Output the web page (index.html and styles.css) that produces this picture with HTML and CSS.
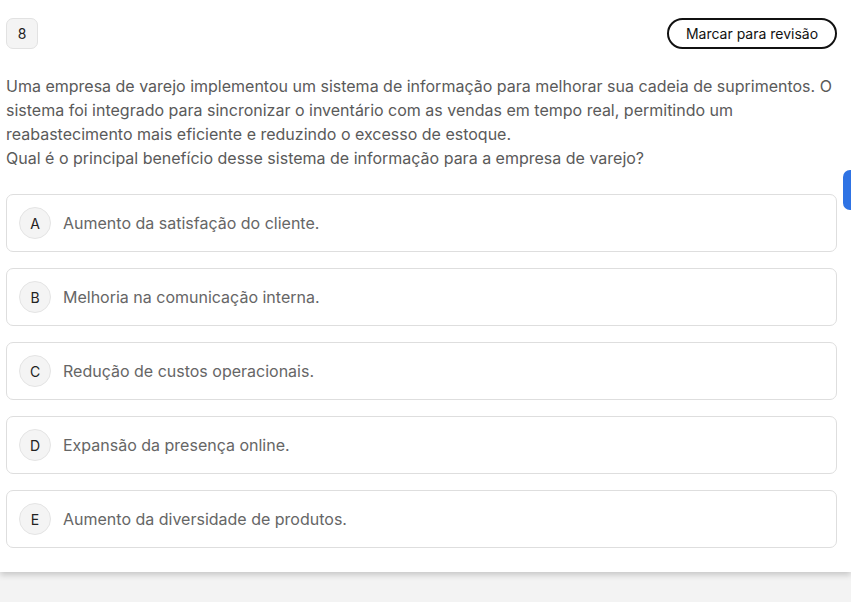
FILE: index.html
```html
<!DOCTYPE html>
<html lang="pt-BR">
<head>
<meta charset="utf-8">
<title>Questão 8</title>
<link rel="stylesheet" href="styles.css">
</head>
<body>
<main class="card">
  <header class="card-head">
    <span class="q-number">8</span>
    <button class="review-btn" type="button">Marcar para revisão</button>
  </header>
  <p class="statement">Uma empresa de varejo implementou um sistema de informação para melhorar sua cadeia de suprimentos. O sistema foi integrado para sincronizar o inventário com as vendas em tempo real, permitindo um reabastecimento mais eficiente e reduzindo o excesso de estoque.<br>Qual é o principal benefício desse sistema de informação para a empresa de varejo?</p>
  <ul class="options">
    <li class="option"><span class="letter">A</span><span class="option-text">Aumento da satisfação do cliente.</span></li>
    <li class="option"><span class="letter">B</span><span class="option-text">Melhoria na comunicação interna.</span></li>
    <li class="option"><span class="letter">C</span><span class="option-text">Redução de custos operacionais.</span></li>
    <li class="option"><span class="letter">D</span><span class="option-text">Expansão da presença online.</span></li>
    <li class="option"><span class="letter">E</span><span class="option-text">Aumento da diversidade de produtos.</span></li>
  </ul>
  <span class="side-tab"></span>
</main>
</body>
</html>
```
FILE: styles.css
```css
html, body {
  margin: 0;
  padding: 0;
}

body {
  background: #f3f3f3;
  font-family: Inter, "Noto Sans", sans-serif;
  height: 602px;
  overflow: hidden;
}

.card {
  position: relative;
  background: #ffffff;
  padding: 18px 14px 24px 6px;
  box-shadow: 0 3px 6px rgba(0, 0, 0, 0.18);
}

.card-head {
  display: flex;
  justify-content: space-between;
  align-items: center;
}

.q-number {
  box-sizing: border-box;
  width: 32px;
  height: 31px;
  display: flex;
  align-items: center;
  justify-content: center;
  background: #f4f4f4;
  border: 1px solid #e2e2e2;
  border-radius: 7px;
  font-size: 14px;
  color: #222;
}

.review-btn {
  box-sizing: border-box;
  width: 170px;
  height: 31px;
  padding: 0;
  background: #fff;
  border: 2px solid #111;
  border-radius: 16px;
  font-family: inherit;
  font-size: 14px;
  color: #111;
}

.statement {
  margin: 25px 0 24px;
  font-size: 16px;
  line-height: 24px;
  color: #5a5a5a;
}

.options {
  list-style: none;
  margin: 0;
  padding: 0;
  display: flex;
  flex-direction: column;
  gap: 16px;
}

.option {
  box-sizing: border-box;
  height: 58px;
  display: flex;
  align-items: center;
  padding-left: 12px;
  border: 1px solid #dedede;
  border-radius: 7px;
}

.letter {
  box-sizing: border-box;
  width: 32px;
  height: 32px;
  flex: none;
  display: flex;
  align-items: center;
  justify-content: center;
  background: #f4f4f4;
  border: 1px solid #e4e4e4;
  border-radius: 50%;
  font-size: 14px;
  color: #222;
}

.option-text {
  margin-left: 12px;
  font-size: 16px;
  color: #666;
}

.side-tab {
  position: absolute;
  top: 170px;
  right: -8px;
  width: 16px;
  height: 40px;
  background: #2f73e4;
  border-radius: 7px;
}
```
